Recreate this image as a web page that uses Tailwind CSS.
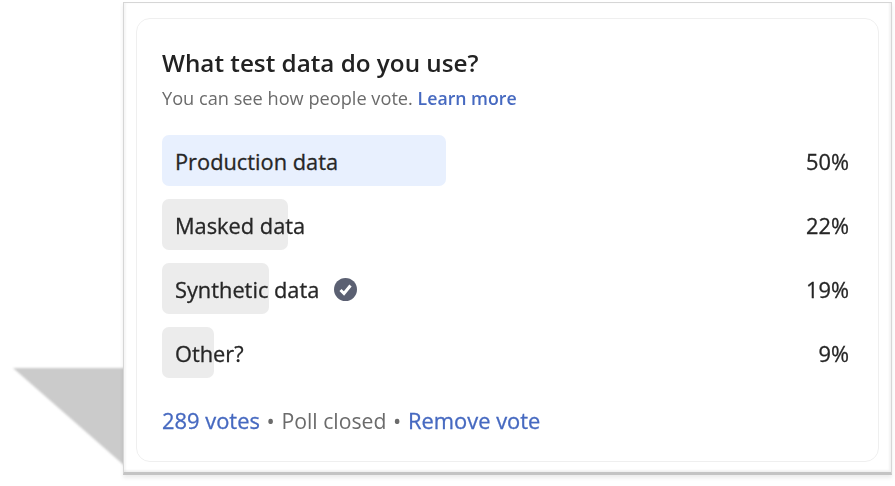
<!DOCTYPE html>
<html lang="en">
<head>
    <meta charset="UTF-8">
    <title>Poll</title>
    <script src="https://cdn.jsdelivr.net/npm/@tailwindcss/browser@4"></script>
</head>
<body class="bg-white w-[895px] h-[486px] overflow-hidden relative font-['Open_Sans',sans-serif]">
    <!-- drop shadow wedge behind the window -->
    <svg class="absolute left-0 top-0 blur-[1px]" width="130" height="486">
        <polygon points="13,368 126,368 126,467" fill="#cbcbcb"/>
    </svg>

    <div class="relative ml-[123px] mt-[2px] w-[769px] h-[473px] bg-white border border-[#d6d6d6] border-b-[3px] border-b-[#c4c4c4] px-[12px] pt-[15px] shadow-[0_3px_4px_rgba(0,0,0,0.08),inset_2px_0_2px_rgba(0,0,0,0.04),inset_-2px_-2px_2px_rgba(0,0,0,0.05)]">
        <div class="h-[444px] border border-[#efefef] rounded-[14px] pl-[25px] pr-[26px] pt-[26px] blur-[0.3px]">
            <h2 class="text-[24.25px] leading-[36px] font-semibold text-[#222]">What test data do you use?</h2>
            <p class="text-[18.2px] leading-[24px] mt-[5px] text-[#6b6b6b]">You can see how people vote. <span class="text-[17.7px] font-semibold text-[#4669c0]">Learn more</span></p>

            <div class="mt-[25px] flex flex-col gap-[13px] text-[21.8px] text-[#262626] [-webkit-text-stroke:0.3px]">
                <div class="relative h-[51px] flex items-center justify-between pt-[3px] pr-[3px]">
                    <div class="absolute left-0 top-0 h-full w-[284px] bg-[#e8f0fe] rounded-[7px]"></div>
                    <span class="relative pl-[13px]">Production data</span>
                    <span class="relative">50%</span>
                </div>
                <div class="relative h-[51px] flex items-center justify-between pt-[3px] pr-[3px]">
                    <div class="absolute left-0 top-0 h-full w-[126px] bg-[#ececec] rounded-[7px]"></div>
                    <span class="relative pl-[13px]">Masked data</span>
                    <span class="relative">22%</span>
                </div>
                <div class="relative h-[51px] flex items-center justify-between pt-[3px] pr-[3px]">
                    <div class="absolute left-0 top-0 h-full w-[107px] bg-[#ececec] rounded-[7px]"></div>
                    <span class="relative pl-[13px] flex items-center gap-[15px]">Synthetic data
                        <svg class="-mt-[2px]" width="23" height="23" viewBox="0 0 23 23">
                            <circle cx="11.5" cy="11.5" r="11.5" fill="#5b6072"/>
                            <path d="M6.5 12 L10 15.5 L16.5 7.5" fill="none" stroke="#fff" stroke-width="3"/>
                        </svg>
                    </span>
                    <span class="relative">19%</span>
                </div>
                <div class="relative h-[51px] flex items-center justify-between pt-[3px] pr-[3px]">
                    <div class="absolute left-0 top-0 h-full w-[52px] bg-[#ececec] rounded-[7px]"></div>
                    <span class="relative pl-[13px]">Other?</span>
                    <span class="relative">9%</span>
                </div>
            </div>

            <p class="mt-[27px] text-[21.9px] leading-[32px] text-[#6b6b6b]"><span class="text-[#4669c0] [-webkit-text-stroke:0.3px]">289 votes</span> <span class="mx-[1px]">•</span> <span class="text-[21.2px]">Poll closed</span> <span class="mx-[1px]">•</span> <span class="text-[#4669c0] [-webkit-text-stroke:0.3px]">Remove vote</span></p>
        </div>
    </div>
</body>
</html>
